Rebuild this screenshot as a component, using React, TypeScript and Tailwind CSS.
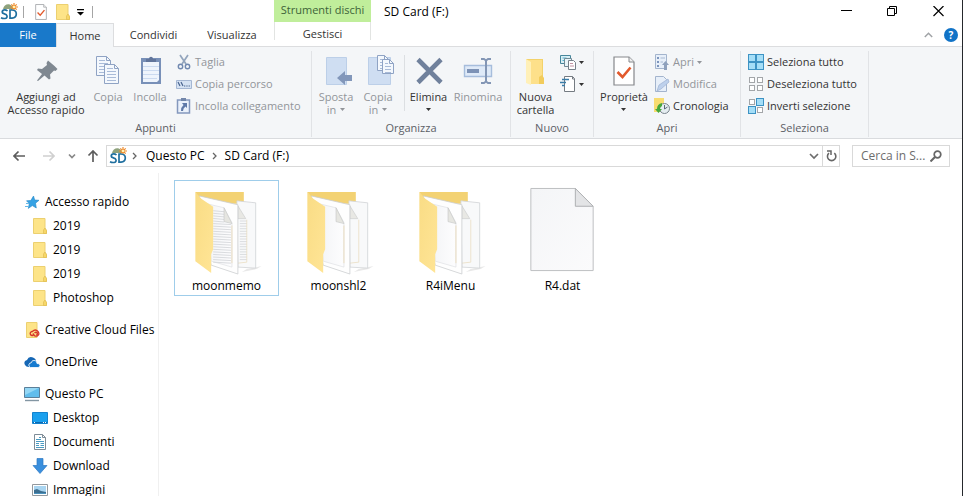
import type { ReactNode } from "react";

function SdIcon() {
  return (
    <svg viewBox="0 0 18 18" className="h-[18px] w-[18px] shrink-0" aria-hidden="true">
      <path d="M3 6C4 1 9 0 12 3L14 6H3Z" fill="#8fa27c" />
      <path d="M14 0v8M10 4h8M11.300 1.300l5.400 5.400M16.700 1.300l-5.400 5.400" stroke="#ee8a2b" strokeWidth="1.200" />
      <circle cx="14" cy="4" r="1.300" fill="#fff3b0" />
      <path d="M7.500 8Q6 6.600 3.600 7Q1.600 8.200 2.600 10L6.300 11.800Q8 13.700 6 15.200Q3.500 16 1 14.700M10 7v8.200h2q4.300-.4 4.300-4.200T12 7z" fill="#fff" stroke="#1f6f9f" strokeWidth="1.700" />
    </svg>
  );
}

function SmallFolder() {
  return (
    <svg viewBox="0 0 14 16" className="h-4 w-[14px] shrink-0" aria-hidden="true">
      <path d="M.5.500h11.500v10l1.500 2v3H.5z" fill="#fde488" stroke="#ecd070" />
      <path d="M10.500 15.500v-3.500l1.500-2 1.500 2.500v3z" fill="#f7d768" stroke="#dfbd55" strokeWidth=".7" />
    </svg>
  );
}

function CheckPage({ className }: { className: string }) {
  return (
    <svg viewBox="0 0 22 30" className={className} aria-hidden="true">
      <path d="M1 1h15l5 5v23H1z" fill="#fff" stroke="#85888c" strokeWidth="1.200" />
      <path d="M16 1v5h5" fill="#f0f0f0" stroke="#85888c" />
      <path d="m4.500 16 5 5 8-9.500" fill="none" stroke="#e2592c" strokeWidth="2.600" />
    </svg>
  );
}

function PageLines({ x, y, w = 14, h = 19 }: { x: number; y: number; w?: number; h?: number }) {
  return (
    <g transform={`translate(${x} ${y})`}>
      <path d={`M.5.500h${w - 4}l4 4v${h - 4}H.5z`} fill="#f4f8fd" stroke="#8fa3c4" />
      <path d={`M${w - 3.5}.500v4h4`} fill="none" stroke="#8fa3c4" />
      {[4, 7, 10, 13, 16].filter((n) => n < h).map((n) => (
        <path key={n} d={`M3 ${n + 0.5}H${n < 7 ? w - 5 : w - 2}`} stroke="#a9bbd8" />
      ))}
    </g>
  );
}

const big = "h-8 w-8";
const small = "h-4 w-4 shrink-0";

function PinIcon() {
  return (
    <svg viewBox="0 0 32 32" className={big} aria-hidden="true">
      <path d="m18 5.500 6.500 5.500 3 3-2 2-1.500-.5-4 4 .5 4-1.500 1-4.500-4L8 26l-1-.5 5-6.500-5-4 1-1.500 4 .5 5-4-.5-2z" fill="#7f8891" />
    </svg>
  );
}
function CopyIcon() {
  return (
    <svg viewBox="0 0 32 32" className={big} aria-hidden="true">
      <PageLines x={4} y={1} />
      <PageLines x={12} y={9} />
    </svg>
  );
}
function PasteIcon() {
  return (
    <svg viewBox="0 0 32 32" className={big} aria-hidden="true">
      <path d="M7 3h20v26H7z" fill="#7890b8" />
      <path d="M9 7h16v18l-2 2H9z" fill="#eef4fc" />
      <path d="M9 11.500h16M9 15.500h16M9 19.500h16M9 23.500h14" stroke="#cbdaf0" />
      <path d="M12 7V4h3c0-3 4-3 4 0h3v3z" fill="#61759b" />
    </svg>
  );
}
function ScissorsIcon() {
  return (
    <svg viewBox="0 0 16 16" className={small} aria-hidden="true">
      <path d="m4 1 6 9M12 1 6 10" stroke="#93a5bd" strokeWidth="1.700" />
      <circle cx="4.500" cy="12.500" r="2.200" fill="none" stroke="#7189b0" strokeWidth="1.400" />
      <circle cx="11.500" cy="12.500" r="2.200" fill="none" stroke="#7189b0" strokeWidth="1.400" />
    </svg>
  );
}
function PathIcon() {
  return (
    <svg viewBox="0 0 16 16" className={small} aria-hidden="true">
      <path d="M.5 4.500h15v8H.5z" fill="#d5e2f3" stroke="#a5b7d3" />
      <path d="m2 6 2 4M5 6l2 4" stroke="#49648f" strokeWidth="1.200" />
      <path d="M8 10h6" stroke="#49648f" strokeDasharray="1.300 1" />
    </svg>
  );
}
function ShortcutIcon() {
  return (
    <svg viewBox="0 0 16 16" className={small} aria-hidden="true">
      <path d="M1.500 2h12v13h-12z" fill="#eaf1fb" stroke="#8498bd" strokeWidth="1.500" />
      <path d="M5 0h5v3H5z" fill="#7387aa" />
      <path d="M6 5h5v5L9.500 8.500Q7 10 7 13H5q0-4 2.500-6z" fill="#5f79a8" />
    </svg>
  );
}
function MoveIcon() {
  return (
    <svg viewBox="0 0 32 32" className={big} aria-hidden="true">
      <path d="M6.500 2.500h20v27h-20z" fill="#cfdef2" stroke="#bccfe8" />
      <path d="m17 23 8-7v4h7v6h-7v4z" fill="#8297ba" />
    </svg>
  );
}
function CopyToIcon() {
  return (
    <svg viewBox="0 0 32 32" className={big} aria-hidden="true">
      <path d="M6.500 2.500h22v27h-22z" fill="#cfdef2" stroke="#bccfe8" />
      <PageLines x={15} y={0} w={11} h={15} />
      <PageLines x={20} y={4} w={11} h={14} />
    </svg>
  );
}
function DeleteIcon() {
  return (
    <svg viewBox="0 0 32 32" className={big} aria-hidden="true">
      <path d="m5 4.500 23 23M28 4.500 5 27.500" stroke="#70819c" strokeWidth="4.600" />
    </svg>
  );
}
function RenameIcon() {
  return (
    <svg viewBox="0 0 32 32" className={big} aria-hidden="true">
      <path d="M2.500 10.500h27v11h-27z" fill="#dfeaf8" stroke="#a6bddc" strokeWidth="1.400" />
      <path d="M5 14h12v4H5z" fill="#7d92b6" />
      <path d="M19 4h3l2 1.500L26 4h3M24 5v22M19 28h3l2-1.500L26 28h3" fill="none" stroke="#8396b5" strokeWidth="2" />
    </svg>
  );
}
function NewFolderIcon() {
  return (
    <svg viewBox="0 0 32 32" className={big} aria-hidden="true">
      <path d="M6 4h17v21H6z" fill="#f3d26a" />
      <path d="M8 5h14v18l2 3v3H11V9z" fill="#fde08a" />
      <path d="m6 4 5 3v23l-5-2z" fill="#fff0b8" />
      <path d="M19 29v-7l3-2 2 3v6z" fill="#f2cc5c" />
    </svg>
  );
}
function NewItemIcon() {
  return (
    <svg viewBox="0 0 16 16" className={small} aria-hidden="true">
      <path d="M.5 1.500h10v8H.5z" fill="#d9eff5" stroke="#46869b" />
      <path d="M2.500 4h4M2.500 6.500h3" stroke="#54b3cf" />
      <path d="M4.500 4.500h7v8h-7z" fill="#eaf6fa" stroke="#718a96" />
      <path d="M8.500 6.500h5l2 2v7h-7z" fill="#fff" stroke="#77818a" />
      <path d="M10 9.500h3M10 12h4" stroke="#c293a3" />
    </svg>
  );
}
function EasyAccessIcon() {
  return (
    <svg viewBox="0 0 16 16" className={small} aria-hidden="true">
      <path d="M4.500.500h8l2 2v13h-10z" fill="#fff" stroke="#747b82" />
      <path d="M12.500.500v2.500h2" fill="none" stroke="#747b82" />
      <path d="M2 3.500h7M0 6.500h6M2 9.500h3" stroke="#3a7da8" strokeWidth="1.400" />
    </svg>
  );
}
function OpenIcon() {
  return (
    <svg viewBox="0 0 16 16" className={small} aria-hidden="true">
      <path d="M1.500.500h11v14h-11z" fill="#e7eff9" stroke="#a3b4cd" />
      <path d="M3 3h2v2H3zM3 7h2v2H3zM3 11h2v2H3z" fill="#7d95bd" />
      <path d="M6.500 4H11M6.500 8H9" stroke="#a8b9d2" />
      <path d="M11.500 7l3.500 4h-2v5h-3v-5H8z" fill="#8fa1bc" />
    </svg>
  );
}
function EditIcon() {
  return (
    <svg viewBox="0 0 16 16" className={small} aria-hidden="true">
      <path d="M1.500.500h8l3 3v12h-11z" fill="#e7eff9" stroke="#a3b4cd" />
      <path d="m3 15 2-6 9-6 1 3-8 7z" fill="#bed1ec" stroke="#9db2d2" strokeWidth=".7" />
    </svg>
  );
}
function HistoryIcon() {
  return (
    <svg viewBox="0 0 16 16" className={small} aria-hidden="true">
      <path d="M0 0h10v14H0z" fill="#f8dc70" />
      <circle cx="10.500" cy="10.500" r="5" fill="#e5edf1" stroke="#78838c" />
      <path d="M10.500 7v4l3-2" fill="none" stroke="#5a6875" />
      <path d="M3 11q0-5 5-6v3q-2 1-2 3h2l-3.500 4L1 11z" fill="#46a83c" />
    </svg>
  );
}
function SelectIcon({ filled }: { filled: boolean[] }) {
  const spots = [[0.5, 0.5], [8.5, 0.5], [0.5, 8.5], [8.5, 8.5]];
  return (
    <svg viewBox="0 0 16 16" className={small} aria-hidden="true">
      {spots.map(([x, y], i) =>
        filled[i] ? (
          <rect key={i} x={x} y={y} width="7" height="7" fill="#a5def7" stroke="#3d93c4" />
        ) : (
          <rect key={i} x={x + 1} y={y + 1} width="5" height="5" fill="#fff" stroke="#a3a6a9" />
        ),
      )}
    </svg>
  );
}

function Caret() {
  return (
    <svg viewBox="0 0 5 3" className="inline-block h-[3px] w-[5px] shrink-0" aria-hidden="true">
      <path d="M0 0h5L2.500 3z" fill="currentColor" />
    </svg>
  );
}

function BigButton({ icon, children, disabled, className }: { icon: ReactNode; children: ReactNode; disabled?: boolean; className: string }) {
  return (
    <button
      type="button"
      disabled={disabled}
      className={`flex shrink-0 flex-col items-center pt-1 leading-[13px] whitespace-nowrap text-[#333] disabled:text-[#92959a] ${className}`}
    >
      {icon}
      <span className="mt-[3px] flex flex-col items-center">{children}</span>
    </button>
  );
}

function SmallButton({ icon, children, disabled }: { icon: ReactNode; children?: ReactNode; disabled?: boolean }) {
  return (
    <button
      type="button"
      disabled={disabled}
      className="flex h-[22px] items-center gap-[3px] whitespace-nowrap text-[#333] disabled:text-[#92959a]"
    >
      {icon}
      {children}
    </button>
  );
}

function Group({ label, className, children }: { label: string; className: string; children: ReactNode }) {
  return (
    <section aria-label={label} className={`mt-1 mb-px flex shrink-0 flex-col border-r border-[#e1e3e6] ${className}`}>
      <div className="flex h-[68px] shrink-0 items-start">{children}</div>
      <div className="text-center leading-[18px] text-[#5c6066]">{label}</div>
    </section>
  );
}

function Ribbon() {
  return (
    <div className="flex h-[92px] shrink-0 overflow-hidden border-b border-[#d9dbde] bg-[#f4f6f8] text-[11px]">
      <Group label="Appunti" className="w-[312px]">
        <BigButton icon={<PinIcon />} className="w-[92px]">
          <span>Aggiungi ad</span>
          <span>Accesso rapido</span>
        </BigButton>
        <BigButton icon={<CopyIcon />} disabled className="w-8">Copia</BigButton>
        <BigButton icon={<PasteIcon />} disabled className="w-[52px]">Incolla</BigButton>
        <div>
          <SmallButton icon={<ScissorsIcon />} disabled>Taglia</SmallButton>
          <SmallButton icon={<PathIcon />} disabled>Copia percorso</SmallButton>
          <SmallButton icon={<ShortcutIcon />} disabled>Incolla collegamento</SmallButton>
        </div>
      </Group>
      <Group label="Organizza" className="w-[199px]">
        <BigButton icon={<MoveIcon />} disabled className="w-12">
          <span>Sposta</span>
          <span className="flex items-center gap-1">in <Caret /></span>
        </BigButton>
        <BigButton icon={<CopyToIcon />} disabled className="w-9">
          <span>Copia</span>
          <span className="flex items-center gap-1">in <Caret /></span>
        </BigButton>
        <div className="mt-1 ml-2 h-14 w-px shrink-0 bg-[#dcdfe2]" />
        <BigButton icon={<DeleteIcon />} className="w-[47px]">
          <span>Elimina</span>
          <span className="flex h-3 items-center"><Caret /></span>
        </BigButton>
        <BigButton icon={<RenameIcon />} disabled className="w-[52px]">Rinomina</BigButton>
      </Group>
      <Group label="Nuovo" className="w-[83px]">
        <BigButton icon={<NewFolderIcon />} className="w-[49px]">
          <span>Nuova</span>
          <span>cartella</span>
        </BigButton>
        <div>
          <SmallButton icon={<NewItemIcon />}><Caret /></SmallButton>
          <SmallButton icon={<EasyAccessIcon />}><Caret /></SmallButton>
        </div>
      </Group>
      <Group label="Apri" className="w-[147px]">
        <BigButton icon={<CheckPage className="h-8 w-6 py-px" />} className="w-[60px]">
          <span>Proprietà</span>
          <span className="flex h-3 items-center"><Caret /></span>
        </BigButton>
        <div>
          <SmallButton icon={<OpenIcon />} disabled>Apri <Caret /></SmallButton>
          <SmallButton icon={<EditIcon />} disabled>Modifica</SmallButton>
          <SmallButton icon={<HistoryIcon />}>Cronologia</SmallButton>
        </div>
      </Group>
      <Group label="Seleziona" className="w-32">
        <div className="pl-[7px]">
          <SmallButton icon={<SelectIcon filled={[true, true, true, true]} />}>Seleziona tutto</SmallButton>
          <SmallButton icon={<SelectIcon filled={[false, false, false, false]} />}>Deseleziona tutto</SmallButton>
          <SmallButton icon={<SelectIcon filled={[false, true, true, false]} />}>Inverti selezione</SmallButton>
        </div>
      </Group>
    </div>
  );
}

function Header() {
  return (
    <header className="flex h-[47px] shrink-0 border-b border-[#dcdddf] text-[11px] text-[#333]">
      <div className="w-[274px] shrink-0">
        <div className="flex h-[23px] items-center">
          <SdIcon />
          <div className="ml-[5px] h-3 w-px bg-[#a5a5a5]" />
          <button type="button" aria-label="Proprietà" className="ml-[11px]"><CheckPage className="h-4 w-3" /></button>
          <button type="button" aria-label="Nuova cartella" className="ml-[9px]"><SmallFolder /></button>
          <button type="button" aria-label="Personalizza barra di accesso rapido" className="ml-[7px] text-black">
            <svg viewBox="0 0 7 8" className="h-2 w-[7px]" aria-hidden="true">
              <path d="M0 1h7v1.200H0zM0 4h7L3.500 7.500z" fill="currentColor" />
            </svg>
          </button>
          <div className="ml-2 h-3 w-px bg-[#a5a5a5]" />
        </div>
        <nav aria-label="Schede" className="flex h-6">
          <button type="button" className="w-14 bg-[#1979ca] text-white">File</button>
          <button type="button" className="w-[58px] border-x border-t border-[#dcdddf] bg-[#f4f6f8]">Home</button>
          <button type="button" className="w-[79px]">Condividi</button>
          <button type="button" className="w-[78px]">Visualizza</button>
        </nav>
      </div>
      <div className="flex w-[97px] shrink-0 flex-col text-center">
        <div className="h-[23px] bg-[#c0ee9b] leading-5 text-[#3d6339]">Strumenti dischi</div>
        <button type="button" className="mb-[6px] h-[18px] border-x border-[#e2e4e2] pt-1">Gestisci</button>
      </div>
      <div className="min-w-0 flex-1">
        <div className="flex h-[23px] justify-between">
          <h1 className="pl-[13px] text-[12px] leading-6 text-black">SD Card (F:)</h1>
          <div className="flex pr-px text-black">
            <button type="button" aria-label="Riduci a icona" className="flex w-[46px] items-center justify-center">
              <svg viewBox="0 0 11 11" className="h-[11px] w-[11px]" aria-hidden="true"><path d="M0 4.500h11" stroke="currentColor" /></svg>
            </button>
            <button type="button" aria-label="Ripristina" className="flex w-[46px] items-center justify-center">
              <svg viewBox="0 0 11 11" className="h-[11px] w-[11px]" aria-hidden="true"><path d="M.5 2.500h7v7h-7zM2.500 2.500v-2h7v7h-2" fill="none" stroke="currentColor" /></svg>
            </button>
            <button type="button" aria-label="Chiudi" className="flex w-[46px] items-center justify-center">
              <svg viewBox="0 0 11 11" className="h-[11px] w-[11px]" aria-hidden="true"><path d="m.5 0 10 10M10.500 0l-10 10" stroke="currentColor" strokeWidth="1.200" /></svg>
            </button>
          </div>
        </div>
        <div className="flex h-6 items-center justify-end gap-[11px] pr-1">
          <button type="button" aria-label="Riduci la barra multifunzione">
            <svg viewBox="0 0 9 6" className="h-[6px] w-[9px]" aria-hidden="true"><path d="m.8 5 3.700-3.700L8.200 5" fill="none" stroke="#a0a3a6" strokeWidth="1.500" /></svg>
          </button>
          <button type="button" aria-label="Guida" className="h-[14px] w-[14px] rounded-full bg-[#1173c7] text-[10px] leading-[14px] font-bold text-white">?</button>
        </div>
      </div>
    </header>
  );
}

function Arrow({ d, label, color, className }: { d: string; label: string; color: string; className: string }) {
  return (
    <button type="button" aria-label={label} className={`shrink-0 ${color} ${className}`}>
      <svg viewBox="0 0 12 12" className="h-3 w-3" aria-hidden="true"><path d={d} fill="none" stroke="currentColor" strokeWidth="1.700" /></svg>
    </button>
  );
}

function Crumb() {
  return (
    <svg viewBox="0 0 5 8" className="h-2 w-[5px] shrink-0" aria-hidden="true"><path d="m1 1 3 3-3 3" fill="none" stroke="#666" strokeWidth="1.300" /></svg>
  );
}

function AddressBar() {
  return (
    <div className="flex h-[34px] shrink-0 items-center pr-3">
      <Arrow label="Indietro" color="text-[#5d5d5d]" className="ml-[13px]" d="M12 6H1M5.500 1.500 1 6l4.500 4.500" />
      <Arrow label="Avanti" color="text-[#d0d0d0]" className="ml-[18px]" d="M0 6h11M6.500 1.500 11 6l-4.500 4.500" />
      <Arrow label="Percorsi recenti" color="text-[#888]" className="ml-[11px]" d="m3 4.500 3 3 3-3" />
      <Arrow label="Su" color="text-[#5d5d5d]" className="ml-[9px]" d="M6 12V1M1.500 5.500 6 1l4.500 4.500" />
      <div className="ml-[7px] flex h-[22px] min-w-0 flex-1 items-center border border-[#d9d9d9] pl-[2px]">
        <SdIcon />
        <nav aria-label="Percorso" className="ml-[5px] flex items-center whitespace-nowrap">
          <Crumb />
          <a href="#pc" className="mr-[7px] ml-[9px]">Questo PC</a>
          <Crumb />
          <a href="#sd" className="ml-[8px]">SD Card (F:)</a>
        </nav>
        <Arrow label="Posizioni precedenti" color="text-[#6d6d6d]" className="mr-[2px] ml-auto" d="m2 4 4 4 4-4" />
        <button type="button" aria-label="Aggiorna" className="flex h-full w-[17px] items-center justify-center border-l border-[#d9d9d9]">
          <svg viewBox="0 0 11 12" className="h-3 w-[11px]" aria-hidden="true">
            <path d="M3 3.200A4.200 4.200 0 1 0 8.300 3.200" fill="none" stroke="#666" strokeWidth="1.600" />
            <path d="M1 1h4v4" fill="none" stroke="#666" strokeWidth="1.500" />
          </svg>
        </button>
      </div>
      <label className="ml-3 flex h-[22px] w-[98px] shrink-0 items-center border border-[#d9d9d9] pr-[7px] pl-2">
        <input type="text" aria-label="Cerca in SD Card (F:)" placeholder="Cerca in S..." className="w-full min-w-0 outline-none placeholder:text-[#6d6d6d]" />
        <svg viewBox="0 0 12 12" className="h-3 w-3 shrink-0" aria-hidden="true">
          <circle cx="7.500" cy="4.500" r="3.300" fill="none" stroke="#666" strokeWidth="1.700" />
          <path d="m5 7-4.500 4.500" stroke="#666" strokeWidth="2" />
        </svg>
      </label>
    </div>
  );
}

function StarIcon() {
  return (
    <svg viewBox="0 0 16 16" className={small} aria-hidden="true">
      <path d="m9.500 2 1.200 4 4.300.3-3.500 2.900.8 4.800-4-2.400-4 2.800 1-4.800-2.800-2.800 4.300-.3z" fill="#35a2e4" stroke="#2184c4" strokeWidth=".6" />
      <path d="M1 12.500h4M2 9.500h3" stroke="#67b9e8" />
    </svg>
  );
}
function CreativeIcon() {
  return (
    <svg viewBox="0 0 16 16" className={small} aria-hidden="true">
      <path d="M2.500.500H13v15H2.500z" fill="#fde488" stroke="#ecd070" />
      <path d="M9.500 13.500H8a2 2 0 1 1 .4-4q3-3 5.600 0 2.300 3-1 4.600H11L8.800 11.500M10.500 11q1.500-1.500 2.700 0 .8 1.600-1 1.800" fill="none" stroke="#d6342a" strokeWidth="1.300" />
    </svg>
  );
}
function CloudIcon() {
  return (
    <svg viewBox="0 0 16 16" className={small} aria-hidden="true">
      <path d="M1 11q-2-4 2-5 2-5 7-2 2 1 2 3L5 13q-3 0-4-2z" fill="#1667b5" />
      <path d="M6.500 13.500q-2.500-1-1.500-3.500.8-1.300 2-1 1-3.500 4-2.500 2 .7 2 3 3-.3 3 2 0 2-2 2z" fill="#167bd0" stroke="#fff" strokeWidth=".8" />
    </svg>
  );
}
function PcIcon() {
  return (
    <svg viewBox="0 0 16 16" className={small} aria-hidden="true">
      <path d="M.5 1.500h15v10H.5z" fill="#61bdec" stroke="#5b7f99" />
      <path d="M1 2h14L1 9z" fill="#94d7f5" />
      <path d="M1 14.500h14" stroke="#8396a3" strokeWidth="1.400" />
    </svg>
  );
}
function DesktopIcon() {
  return (
    <svg viewBox="0 0 16 16" className={small} aria-hidden="true">
      <path d="M.5 2.500h15v11H.5z" fill="#1aa0ee" stroke="#1382ce" />
      <path d="M1 12.500h14" stroke="#0c68b0" />
      <path d="M2 12.500h1M11 12.500h1M13 12.500h1" stroke="#fff" />
    </svg>
  );
}
function DocumentIcon() {
  return (
    <svg viewBox="0 0 16 16" className={small} aria-hidden="true">
      <path d="M2.500.500h8l3 3v12h-11z" fill="#fff" stroke="#7e8c97" />
      <path d="M10.500.500v3h3" fill="none" stroke="#7e8c97" />
      <path d="M7 3.500h2M4 5.500h5M4 7.500h8M4 9.500h3M8.500 9.500H12M4 11.500h3M8.500 11.500H12M4 13.500h8" stroke="#4b9bc2" />
    </svg>
  );
}
function DownloadIcon() {
  return (
    <svg viewBox="0 0 16 16" className={small} aria-hidden="true">
      <path d="M5 .5h6v7h4L8 15.500 1 7.500h4z" fill="#3a8fdd" stroke="#2c79c3" strokeWidth=".7" />
    </svg>
  );
}
function ImageIcon() {
  return (
    <svg viewBox="0 0 16 16" className={small} aria-hidden="true">
      <path d="M.5 2.500h15v11H.5z" fill="#fff" stroke="#93999e" />
      <path d="M2 4h12v8H2z" fill="#a9d5f1" />
      <path d="m2 8 3-1 4 2 5 1v2H2z" fill="#3c6f91" />
      <path d="M2 11h12v1H2z" fill="#4b92bd" />
    </svg>
  );
}

function TreeItem({ icon, label, nested }: { icon: ReactNode; label: string; nested?: boolean }) {
  return (
    <li>
      <a href="#folder" className={`flex h-6 items-center whitespace-nowrap ${nested ? "pl-8" : "pl-6"}`}>
        <span className="mr-[5px] flex w-4 shrink-0 justify-center">{icon}</span>
        {label}
      </a>
    </li>
  );
}

function Sidebar() {
  return (
    <nav aria-label="Riquadro di spostamento" className="flex w-[159px] shrink-0 flex-col gap-2 overflow-hidden border-r border-[#f0f0f0] pt-[17px]">
      <ul>
        <TreeItem icon={<StarIcon />} label="Accesso rapido" />
        <TreeItem nested icon={<SmallFolder />} label="2019" />
        <TreeItem nested icon={<SmallFolder />} label="2019" />
        <TreeItem nested icon={<SmallFolder />} label="2019" />
        <TreeItem nested icon={<SmallFolder />} label="Photoshop" />
      </ul>
      <ul><TreeItem icon={<CreativeIcon />} label="Creative Cloud Files" /></ul>
      <ul><TreeItem icon={<CloudIcon />} label="OneDrive" /></ul>
      <ul>
        <TreeItem icon={<PcIcon />} label="Questo PC" />
        <TreeItem nested icon={<DesktopIcon />} label="Desktop" />
        <TreeItem nested icon={<DocumentIcon />} label="Documenti" />
        <TreeItem nested icon={<DownloadIcon />} label="Download" />
        <TreeItem nested icon={<ImageIcon />} label="Immagini" />
      </ul>
    </nav>
  );
}

function FolderArt({ written }: { written?: boolean }) {
  const rows = Array.from({ length: 21 }, (_, i) => 25 + i * 2.6);
  return (
    <svg viewBox="0 0 79 92" className="h-[92px] w-[79px]" aria-hidden="true">
      <defs>
        <linearGradient id="cover" x1="0" y1="0" x2="1" y2="1">
          <stop offset="0" stopColor="#f9dc85" />
          <stop offset="1" stopColor="#ffe596" />
        </linearGradient>
        <linearGradient id="sheet" x1="0" y1="0" x2="1" y2="0">
          <stop offset="0" stopColor="#f3f4f6" />
          <stop offset="1" stopColor="#fdfdfe" />
        </linearGradient>
      </defs>
      <path d="m60 84 15-3-5 3-15 3z" fill="#e8e8e8" />
      <path d="M8 6h49v12H14z" fill="#f3d273" />
      <path d="m50 15 19 2v66l-18-1z" fill="#f8f9fa" stroke="#d0d2d5" strokeWidth=".8" />
      <path d="M51 20v13h8z" fill="#e8e8e4" stroke="#c7c8c9" strokeWidth=".6" />
      {written && rows.slice(4, 20).map((y) => <path key={y} d={`M53 ${y}h7`} stroke="#d3d5d9" strokeWidth=".8" />)}
      <path d="M60 34v43l-9 1" fill="none" stroke="#e8d9ba" strokeWidth=".7" />
      <path d="m12 10 39 9v70l-27-9z" fill="#fefefe" stroke="#cbcdd0" strokeWidth=".8" />
      <path d="m20 18 17 4 8 15v45l-21-6z" fill="url(#sheet)" stroke="#dadbde" strokeWidth=".6" />
      {written && rows.map((y) => <path key={y} d={`M26 ${y}l${y < 36 ? 11 : 18} 1`} stroke="#d0d2d6" strokeWidth=".8" />)}
      <path d="m37 22 8 16-8-2z" fill="#e6e6e1" stroke="#c2c3c4" strokeWidth=".6" />
      <path d="m8 6 6 7 12 8v43l-2 5v19L8 76z" fill="url(#cover)" />
      <path d="M45 40v38" stroke="#ead9b6" strokeWidth=".8" />
    </svg>
  );
}

function FileArt() {
  return (
    <svg viewBox="0 0 79 92" className="h-[92px] w-[79px]" aria-hidden="true">
      <defs>
        <linearGradient id="paper" x1="0" y1="0" x2="1" y2="1">
          <stop offset="0" stopColor="#f4f5f7" />
          <stop offset="1" stopColor="#fbfbfc" />
        </linearGradient>
      </defs>
      <path d="M7.500 2.500h45l18 18v65h-63z" fill="url(#paper)" stroke="#bdbfc1" />
      <path d="M52.500 2.500v18h18z" fill="#e3e4e6" stroke="#aeb0b2" />
    </svg>
  );
}

function FileTile({ art, name, selected }: { art: ReactNode; name: string; selected?: boolean }) {
  return (
    <li>
      <button
        type="button"
        className={`flex h-[116px] w-[105px] flex-col items-center border pt-[5px] ${selected ? "border-[#9fcdea]" : "border-transparent"}`}
      >
        {art}
        <span className="leading-[18px]">{name}</span>
      </button>
    </li>
  );
}

export default function App() {
  return (
    <div className="flex h-screen flex-col overflow-hidden border-r border-[#25282c] bg-white font-['Open_Sans','Noto_Sans',sans-serif] text-[12px] leading-4 text-black">
      <Header />
      <Ribbon />
      <AddressBar />
      <div className="flex min-h-0 flex-1">
        <Sidebar />
        <main className="min-w-0 flex-1 pt-[7px] pl-[15px]">
          <ul className="flex flex-wrap gap-[7px]">
            <FileTile selected art={<FolderArt written />} name="moonmemo" />
            <FileTile art={<FolderArt />} name="moonshl2" />
            <FileTile art={<FolderArt />} name="R4iMenu" />
            <FileTile art={<FileArt />} name="R4.dat" />
          </ul>
        </main>
      </div>
    </div>
  );
}
